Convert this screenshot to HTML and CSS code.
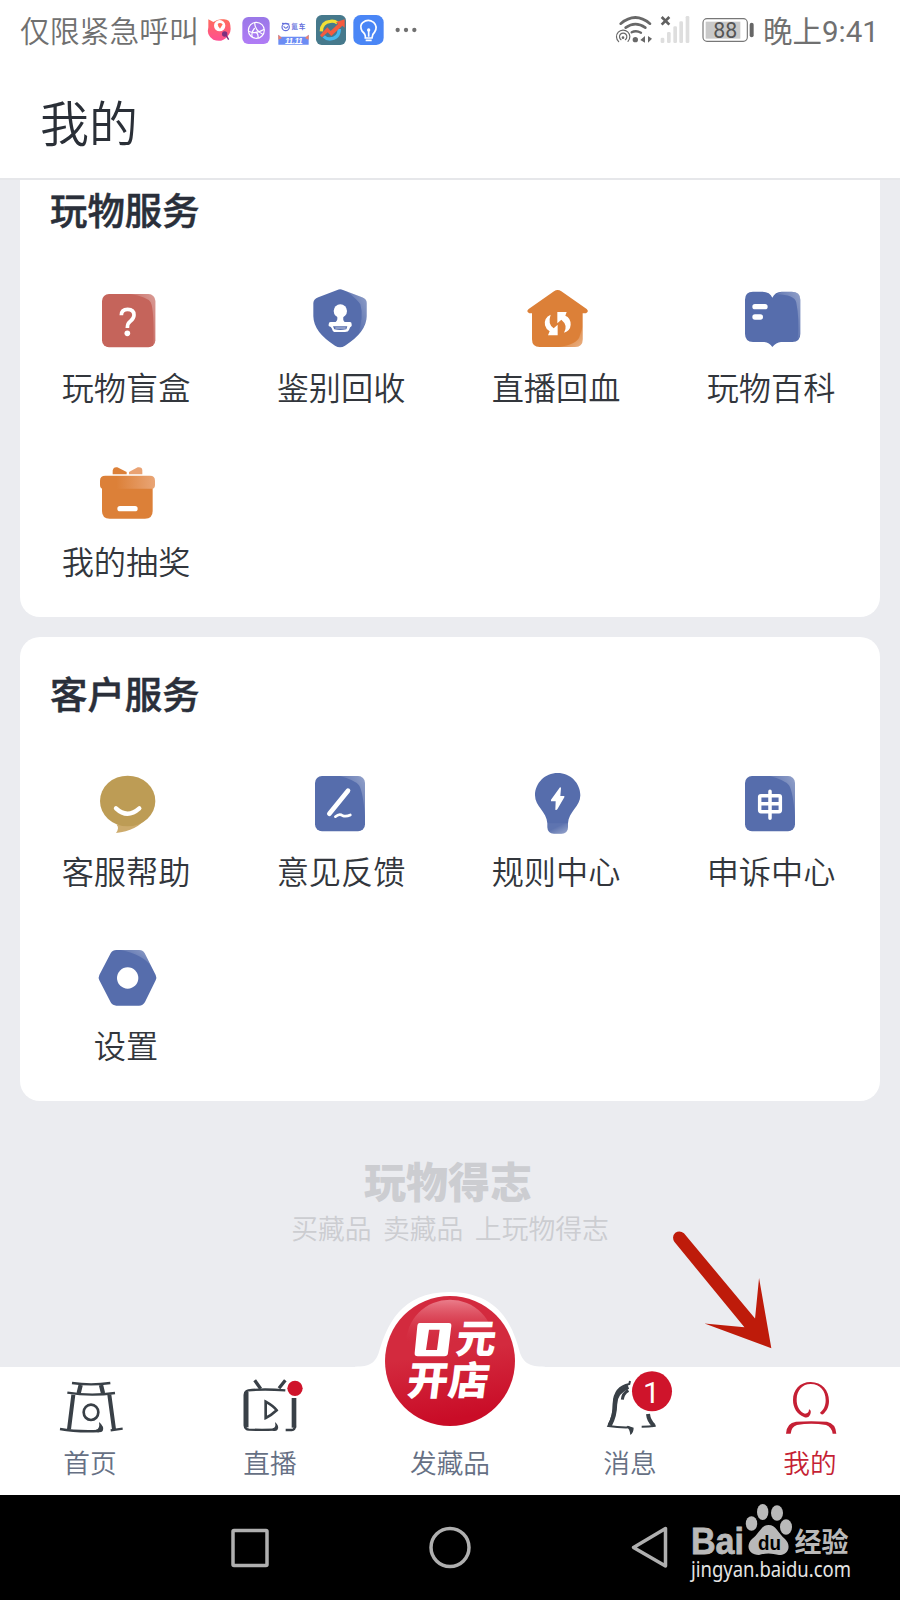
FILE: index.html
```html
<!DOCTYPE html>
<html lang="zh-CN">
<head>
<meta charset="utf-8">
<title>我的</title>
<link rel="stylesheet" href="styles.css">
</head>
<body>
<div class="phone">
  <div class="statusbar">
    <span class="carrier">仅限紧急呼叫</span>
    <svg class="notifs" width="215" height="40" viewBox="615 30 645 120">
      <defs>
        <linearGradient id="gp" x1="0" y1="0" x2="0" y2="1"><stop offset="0" stop-color="#ff6c5c"/><stop offset="1" stop-color="#ff4f93"/></linearGradient>
        <linearGradient id="gv" x1="0" y1="0" x2="0" y2="1"><stop offset="0" stop-color="#9a78e8"/><stop offset="1" stop-color="#b07cf5"/></linearGradient>
      </defs>
      <path d="M625 58L640 66Q655 56 668 58Q690 56 691 76Q695 98 682 110Q665 129 640 119Q618 106 625 82Z" fill="url(#gp)"/>
      <circle cx="659" cy="77" r="17" fill="#fff"/><path d="M653 72Q660 65 668 73L660 86L655 79Z" fill="#ff6c5c"/>
      <circle cx="674" cy="102" r="8" fill="#7d2f7f"/><path d="M679 107L686 119" stroke="#7d2f7f" stroke-width="4"/>
      <rect x="727" y="51" width="82" height="81" rx="18" fill="url(#gv)"/>
      <g fill="none" stroke="#fff" stroke-width="3.5"><circle cx="769" cy="91" r="24"/><path d="M764 68Q764 90 788 103M745 93Q765 105 793 88M764 84Q752 98 757 112M768 96Q776 103 774 114"/></g>
      <g fill="none" stroke="#6470dc" stroke-width="3.5"><circle cx="857" cy="81" r="11"/><path d="M851 79Q857 90 864 79M846 70L868 72"/></g>
      <text x="874" y="88" class="app-mini" textLength="42">氪车</text>
      <path d="M835 104L842 110H919L926 104V134H835Z" fill="#6b8cf4"/>
      <path d="M835 104L846 114L835 119ZM926 104L915 114L926 119Z" fill="#f0806b"/>
      <text x="855" y="132" class="app-date" textLength="53">11.11</text>
      <rect x="948" y="45" width="90" height="90" rx="17" fill="#46798c"/>
      <path d="M964 94Q965 66 991 64Q1003 62 1012 69" fill="none" stroke="#f2df35" stroke-width="10"/>
      <path d="M1018 87Q1017 116 989 117Q979 117 971 109" fill="none" stroke="#47b7ec" stroke-width="10"/>
      <path d="M960 106L982 82L992 93L1015 71L1007 67L1034 58L1034 83L1027 77L994 108L983 97L966 112Z" fill="#f55b3f"/>
      <rect x="1060" y="45" width="91" height="90" rx="22" fill="#4a86f6"/>
      <g fill="none" stroke="#fff" stroke-width="5"><path d="M1096 114V107Q1094 100 1086 93Q1078 77 1088 68Q1104 55 1121 67Q1134 80 1124 96Q1117 102 1116 114Z"/><path d="M1097 121H1115M1106 91V110"/></g><circle cx="1106" cy="90" r="5" fill="#fff"/>
      <g fill="#707070"><circle cx="1193" cy="90" r="6.500"/><circle cx="1218" cy="90" r="6.500"/><circle cx="1243" cy="90" r="6.500"/></g>
    </svg>
    <span class="spacer"></span>
    <svg class="signals" width="144" height="40" viewBox="100 30 432 120">
      <g fill="none" stroke="#686868" stroke-linecap="round">
        <path d="M123 71Q167 34 211 71" stroke-width="8"/><path d="M138 83Q167 62 197 83" stroke-width="8"/><path d="M156 97Q169 90 184 98" stroke-width="7"/>
        <path d="M117 125A20 20 0 1 1 145 124M124 119A11 11 0 1 1 137 119" stroke-width="3.5"/>
      </g>
      <circle cx="130" cy="113" r="4" fill="#686868"/><circle cx="167" cy="119" r="8" fill="#686868"/>
      <path d="M196 108V128L182 120ZM205 108L217 116L205 128Z" fill="#686868"/>
      <path d="M246 51L269 74M269 51L246 74" stroke="#606060" stroke-width="8"/>
      <g fill="#dedede"><rect x="243" y="113" width="11" height="16" rx="4"/><rect x="262" y="96" width="11" height="33" rx="4"/><rect x="281" y="79" width="11" height="50" rx="4"/><rect x="299" y="64" width="11" height="65" rx="4"/><rect x="318" y="48" width="11" height="81" rx="4"/></g>
      <rect x="370" y="56" width="133" height="68" rx="12" fill="#fff" stroke="#777" stroke-width="3.5"/>
      <rect x="378" y="65" width="104" height="51" fill="#c9c9c9"/>
      <rect x="510" y="68" width="12" height="44" rx="6" fill="#666"/>
      <text x="401" y="114" class="battery" textLength="72">88</text>
    </svg>
    <span class="time">晚上9:41</span>
  </div>
  <header class="header"><h1>我的</h1></header>

  <main class="content">
    <section class="card card-first">
      <h2>玩物服务</h2>
      <div class="grid">
        <div class="item">
          <svg viewBox="213 42 219 219">
            <defs><linearGradient id="shine" x1="0" y1="1" x2="1" y2="0"><stop offset=".3" stop-color="#fff" stop-opacity="0"/><stop offset="1" stop-color="#fff" stop-opacity=".36"/></linearGradient></defs>
            <rect x="246" y="72" width="160" height="160" rx="21" fill="#c5645b"/><path d="M330 72H385Q406 72 406 93V209Q405 222 400 226Q403 120 392 97Q382 80 330 72Z" fill="url(#shine)"/><path d="M304 136Q304 118 323 118Q342 118 342 135Q342 145 331 154Q322 160 322 174" fill="none" stroke="#fff" stroke-width="11"/><circle cx="322" cy="190" r="8.500" fill="#fff"/></svg>
          <span>玩物盲盒</span></div>
        <div class="item">
          <svg viewBox="858 42 219 219"><path d="M952 60Q960 55 969 60L1026 82Q1040 87 1040 99V139Q1039 187 975 227Q960 236 945 227Q881 187 880 139V99Q881 87 895 82Z" fill="#566dac"/><path d="M980 64L1026 82Q1040 87 1040 99V139Q1037 170 1014 197Q1032 138 1021 103Q1012 89 980 64Z" fill="url(#shine)"/><circle cx="961" cy="123" r="20" fill="#fff"/><path d="M951 135Q961 143 971 135Q967 151 974 156H990Q995 156 995 163V168Q989 171 987 180Q985 186 975 186H946Q938 186 936 176Q934 170 926 168V163Q926 156 932 156H947Q955 150 951 135Z" fill="#fff"/><path d="M939 169H982L979 178Q961 182 943 178Z" fill="#566dac"/><path d="M946 174H977" stroke="#c5cee4" stroke-width="3"/></svg>
          <span>鉴别回收</span></div>
        <div class="item">
          <svg viewBox="213 42 219 219"><defs><linearGradient id="shineLow" x1="0" y1="0" x2="1" y2="1"><stop offset=".4" stop-color="#fff" stop-opacity=".05"/><stop offset="1" stop-color="#fff" stop-opacity=".4"/></linearGradient></defs><path d="M312 64Q323 56 334 64L410 117Q418 124 408 130H398V208Q398 231 375 231H269Q246 231 246 208V130H238Q227 124 236 117Z" fill="#dc8038"/><path d="M398 170V208Q398 231 375 231H326Q379 224 388 202Z" fill="url(#shineLow)"/><path d="M302 134Q281 143 285 166Q288 178 299 184L294 196H323V164L311 175Q292 162 302 134Z" fill="#fff"/><path d="M322 126H350L346 137Q362 143 362 164Q361 182 342 188Q355 166 334 149L322 160Z" fill="#fff"/></svg>
          <span>直播回血</span></div>
        <div class="item">
          <svg viewBox="858 42 219 219"><path d="M909 65H937Q960 65 967 83Q975 65 995 65H1025Q1051 65 1051 89V191Q1051 215 1027 216H993Q978 217 967 231Q958 217 943 216H909Q885 215 885 191V89Q885 65 909 65Z" fill="#566dac"/><path d="M995 65H1025Q1051 65 1051 89V191Q1049 204 1043 208Q1049 148 1039 98Q1034 74 980 73Z" fill="url(#shine)"/><path d="M915 110H945M915 141H931" stroke="#fff" stroke-width="16" stroke-linecap="round"/></svg>
          <span>玩物百科</span></div>
        <div class="item">
          <svg viewBox="213 564 219 219"><defs><linearGradient id="go"><stop offset=".3" stop-color="#dc8038"/><stop offset="1" stop-color="#e9a576"/></linearGradient></defs><path d="M246 650H398V723Q398 746 375 746H269Q246 746 246 723Z" fill="#dc8038"/><path d="M256 617H390Q405 617 405 632V645Q405 656 396 656H249Q240 656 240 645V632Q240 617 256 617Z" fill="url(#go)"/><path d="M278 613V602Q280 590 292 592L320 606V613Z" fill="#dc8038"/><path d="M327 613V606L353 592Q367 590 367 602V613Z" fill="#e9a273"/><path d="M300 716H345" stroke="#fff" stroke-width="16" stroke-linecap="round"/></svg>
          <span>我的抽奖</span></div>
      </div>
    </section>

    <section class="card">
      <h2>客户服务</h2>
      <div class="grid">
        <div class="item">
          <svg viewBox="213 24 219 219"><path d="M290 194Q299 203 288 219Q350 213 382 172L350 180Z" fill="#cdab6c"/><ellipse cx="323" cy="123" rx="83" ry="76" fill="#bd9c55"/><path d="M288 145Q322 177 358 145" stroke="#fff" fill="none" stroke-width="13" stroke-linecap="round"/></svg>
          <span>客服帮助</span></div>
        <div class="item">
          <svg viewBox="858 24 219 219"><rect x="885" y="48" width="150" height="166" rx="21" fill="#566dac"/><path d="M960 48H1014Q1035 48 1035 69V170Q1029 95 1017 76Q1007 61 960 48Z" fill="url(#shine)"/><path d="M984 92L928 161" stroke="#fff" stroke-width="14" stroke-linecap="round"/><path d="M946 170Q958 159 968 167Q978 171 991 165" stroke="#fff" fill="none" stroke-width="8" stroke-linecap="round"/></svg>
          <span>意见反馈</span></div>
        <div class="item">
          <svg viewBox="213 24 219 219"><path d="M323 39C361 39 391 69 391 106C391 140 356 155 354 190V202Q353 221 334 221H312Q293 221 292 202V190C290 155 255 140 255 106C255 69 285 39 323 39Z" fill="#566dac"/><path d="M292 190H354V202Q353 221 334 221H312Q293 221 292 202Z" fill="url(#shineLow)"/><path d="M330 82L303 119V124H317L316 149Q319 151 322 148L343 112V108H331L333 84Q332 81 330 82Z" fill="#fff"/></svg>
          <span>规则中心</span></div>
        <div class="item">
          <svg viewBox="858 24 219 219"><rect x="885" y="48" width="150" height="166" rx="21" fill="#566dac"/><path d="M960 48H1014Q1035 48 1035 69V170Q1029 95 1017 76Q1007 61 960 48Z" fill="url(#shine)"/><path d="M933 107H987Q991 107 991 111V151Q991 155 987 155H933Q929 155 929 151V111Q929 107 933 107ZM929 131H991M960 94V175" fill="none" stroke="#fff" stroke-width="10.500" stroke-linecap="round"/></svg>
          <span>申诉中心</span></div>
        <div class="item">
          <svg viewBox="213 546 219 219"><path d="M289 570H357Q368 570 374 580L407 645Q411 653 407 661L375 726Q369 737 357 737H289Q278 737 272 727L238 661Q234 653 238 645L272 580Q278 570 289 570Z" fill="#566dac"/><path d="M302 570H357Q368 570 374 580L394 620Q370 584 302 570Z" fill="url(#shine)"/><circle cx="323" cy="654" r="32" fill="#fff"/></svg>
          <span>设置</span></div>
      </div>
    </section>

    <div class="brand">
      <strong>玩物得志</strong>
      <p>买藏品 卖藏品 上玩物得志</p>
    </div>
  </main>

  <nav class="tabbar">
    <svg class="bump" width="190" height="78" viewBox="255 454 570 234"><path d="M255 681C300 681 315 670 326 640C350 560 390 457 539 457C688 457 730 560 750 640C762 670 777 681 825 681V688H255Z" fill="#fff"/></svg>
    <a class="tab">
      <svg viewBox="144 48 252 180" fill="none" stroke="#394047" stroke-width="7"><path d="M216 69Q273 77 331 69M202 98Q273 109 345 99" /><path d="M242 75L236 100M303 75L309 100" stroke-width="13"/><path d="M220 104L207 208M328 104L342 208" stroke-width="12"/><path d="M180 207Q230 216 297 213M332 211L368 206"/><path d="M297 186Q314 200 308 213Q304 218 290 216L288 209Q301 207 297 186Z" fill="#394047" stroke="none"/><ellipse cx="273" cy="157" rx="22" ry="23" stroke-width="8"/></svg>
      <span>首页</span></a>
    <a class="tab">
      <svg viewBox="684 48 252 180" fill="none" stroke="#394047" stroke-width="7"><path d="M764 61L782 86M856 61L837 85" stroke-width="10"/><path d="M856 91Q790 86 745 91Q735 93 734 105V196Q735 208 747 209Q788 210 821 209M857 210H875Q885 209 885 197"/><path d="M739 96V202" stroke-width="13"/><path d="M882 114V203" stroke-width="14"/><path d="M825 186Q840 199 832 210Q828 214 818 212L818 205Q829 203 825 186Z" fill="#394047" stroke="none"/><path d="M797 125V174Q814 166 830 151Q822 139 797 125Z" stroke-width="8"/><circle cx="885" cy="85" r="23" fill="#cf142b" stroke="none"/></svg>
      <span>直播</span></a>
    <a class="tab tab-publish">
      <svg class="orb" width="132" height="132" viewBox="341 464 396 396">
        <defs><linearGradient id="gr" x1="0" y1="0" x2=".15" y2="1"><stop offset="0" stop-color="#d32a3e"/><stop offset=".5" stop-color="#d32a3e"/><stop offset="1" stop-color="#c90c27"/></linearGradient>
        <linearGradient id="gs" x1="0" y1="0" x2="0" y2="1"><stop offset="0" stop-color="#ea7e8b"/><stop offset=".5" stop-color="#d32a3e" stop-opacity="0"/></linearGradient></defs>
        <circle cx="539" cy="662" r="195" fill="url(#gr)"/>
        <circle cx="539" cy="610" r="132" fill="url(#gs)"/>
        <path d="M448 548H536Q544 548 543 557L533 638Q532 648 522 648H442Q432 648 433 638L441 557Q442 548 448 548ZM476 568L467 629H500L508 568Z" fill="#fff" fill-rule="evenodd"/>
        <text class="orb-text" transform="translate(553 638) skewX(-7)" textLength="120" lengthAdjust="spacingAndGlyphs">元</text>
        <text class="orb-text" transform="translate(406 765) skewX(-7)" textLength="246" lengthAdjust="spacingAndGlyphs">开店</text>
      </svg>
      <span>发藏品</span></a>
    <a class="tab">
      <svg viewBox="84 498 252 180" fill="none" stroke="#394047" stroke-width="6"><path d="M210 513L208 522Q163 531 161 580Q162 618 145 648Q177 653 208 652" /><path d="M205 530Q165 545 165 584Q165 617 149 646" stroke-width="13"/><path d="M205 541Q188 551 187 569" stroke-width="9"/><path d="M203 647L221 653Q221 668 211 675Q209 656 200 652Z" fill="#394047" stroke="none"/><path d="M264 612Q266 633 282 647" stroke-width="12"/><path d="M245 650Q267 650 287 647"/><circle cx="276" cy="544" r="64" fill="#fff" stroke="none"/><circle cx="276" cy="544" r="60" fill="#cf142b" stroke="none"/><text class="badge-num" x="274" y="578" text-anchor="middle">1</text></svg>
      <span>消息</span></a>
    <a class="tab active">
      <svg viewBox="624 498 252 180" fill="#c51f34"><path fill-rule="evenodd" d="M752 516C786 516 807 541 807 573C807 592 799 604 789 613Q783 615 780 608C791 599 797 588 797 570C797 543 781 522 752 522C727 522 711 541 710 567C709 591 721 607 735 611Q747 611 747 598Q756 602 750 615Q744 626 732 621C711 612 699 594 699 570C699 540 719 516 752 516Z"/><path d="M678 671Q680 638 708 635Q753 632 801 635Q827 640 829 671H818Q815 651 798 645Q753 638 711 645Q694 650 692 671Z"/></svg>
      <span>我的</span></a>
  </nav>

  <footer class="sysnav">
    <svg width="900" height="105" viewBox="0 0 900 105">
      <g fill="none" stroke="#afafaf" stroke-width="3.500" stroke-linejoin="round"><rect x="233" y="35.500" width="34" height="35" rx="1"/><circle cx="450" cy="52.500" r="19"/><path d="M633.500 52.500L665.500 33.500V71Z"/></g>
      <g fill="#b9b9b9">
        <text class="logo-bai" x="691" y="58.500" textLength="53" lengthAdjust="spacingAndGlyphs">Bai</text>
        <ellipse cx="751.500" cy="28.500" rx="5.700" ry="7.300"/><ellipse cx="762.700" cy="17" rx="5.700" ry="8"/><ellipse cx="777" cy="18" rx="6" ry="7.700"/><ellipse cx="786" cy="32" rx="6" ry="7.700"/>
        <path d="M768.500 30C776 30 778 38 785 44C792 51 788 60 779 60Q768 57 759 60C749 60 745 51 752 44C760 38 761 30 768.500 30Z"/>
        <text class="logo-jy" x="794.500" y="56.500" textLength="54" lengthAdjust="spacingAndGlyphs">经验</text>
      </g>
      <text class="logo-du" x="758" y="55" textLength="23" lengthAdjust="spacingAndGlyphs">du</text>
      <text class="logo-url" x="691" y="81.500" textLength="160" lengthAdjust="spacingAndGlyphs">jingyan.baidu.com</text>
    </svg>
  </footer>
  <svg class="arrow" width="103" height="122" viewBox="330 55 310 366"><path d="M372 67L586 324L598 202L635 413L434 339L554 350L343 93Q334 77 346 66Q359 58 372 67Z" fill="#be1b0a"/></svg>
</div>
</body>
</html>
```
FILE: styles.css
```css
* { box-sizing: border-box; margin: 0; padding: 0; }
body { width: 900px; background: #fff; font-family: "Noto Sans CJK SC", sans-serif; color: #32363c; }
svg { display: block; flex: none; overflow: visible; }
.phone { position: relative; width: 900px; height: 1600px; display: flex; flex-direction: column; overflow: hidden; }
.statusbar { height: 60px; padding: 0 22px 0 20px; display: flex; align-items: center; color: #707070; font-size: 29.8px; font-weight: 350; white-space: nowrap; }
.carrier { width: 185px; margin-top: -2px; }
.time { margin: -2px 0 0 6px; width: 115px; font-family: Roboto, "Noto Sans CJK SC", sans-serif; font-size: 29.5px; font-weight: 400; }
.spacer { flex: 1; }
.app-mini { font-size: 20px; font-weight: 700; fill: #6470dc; }
.app-date { font: italic 700 25px "Liberation Sans", sans-serif; fill: #fff; }
.battery { font: 64px Roboto, sans-serif; fill: #555; }
.header { height: 120px; padding: 25px 40px 0; border-bottom: 2px solid #e6e7ea; }
h1 { font-size: 49px; line-height: 72px; font-weight: 350; color: #2a2f37; }
.content { height: 1187px; background: #ebecf0; padding: 0 20px; }
.card { height: 464px; background: #fff; border-radius: 20px; padding-top: 26px; margin-bottom: 20px; }
.card-first { height: 437px; border-radius: 0 0 20px 20px; padding-top: 0; }
.card-first h2 { height: 59px; line-height: 58px; }
.card-first .grid { padding-top: 45px; }
h2 { height: 60px; padding-left: 30px; font-size: 37.4px; line-height: 60px; font-weight: 500; color: #2a2f3a; -webkit-text-stroke: 0.5px #2a2f3a; }
.grid { display: grid; grid-template-columns: repeat(4, 215px); grid-auto-rows: 174px; padding-top: 45px; }
.item { display: flex; flex-direction: column; align-items: center; }
.item svg { width: 73px; height: 73px; }
.item span { width: 132px; margin: 5px 3px 0 0; text-align: center; font-size: 32.2px; line-height: 48px; font-weight: 350; white-space: nowrap; }
.brand { display: flex; flex-direction: column; align-items: center; padding-top: 30px; color: #cccdd1; }
.brand strong { font-size: 42px; line-height: 58px; font-weight: 900; margin-right: 4px; }
.brand p { font-size: 26.800px; line-height: 36px; padding-top: 1px; font-weight: 350; word-spacing: 5.5px; white-space: nowrap; }
.tabbar { position: relative; height: 128px; background: #fff; display: flex; }
.bump { position: absolute; left: 355px; top: -76px; }
.tab { width: 180px; display: flex; flex-direction: column; align-items: center; padding-top: 9px; position: relative; color: #667084; font-size: 26.700px; line-height: 38px; font-weight: 350; }
.tab svg { width: 84px; height: 60px; }
.tab > span { margin-top: 7px; }
.tab.active { color: #c51f34; }
.tab-publish { padding-top: 69px; }
.tab svg.orb { position: absolute; left: 24px; top: -72px; width: 132px; height: 132px; }
.orb-text { font-size: 119px; font-weight: 900; fill: #fff; }
.badge-num { font: 90px Roboto, sans-serif; fill: #fff; stroke: none; }
.sysnav { height: 105px; background: #000; }
.logo-bai { font: 700 37px "Liberation Sans", sans-serif; stroke: #b9b9b9; stroke-width: 0.8px; }
.logo-jy { font-size: 27px; font-weight: 700; }
.logo-du { font: 700 21px "Liberation Sans", sans-serif; fill: #000; }
.logo-url { font: 22px "Noto Sans", "Open Sans", sans-serif; fill: #e4e4e4; }
.arrow { position: absolute; left: 670px; top: 1229px; }
```
